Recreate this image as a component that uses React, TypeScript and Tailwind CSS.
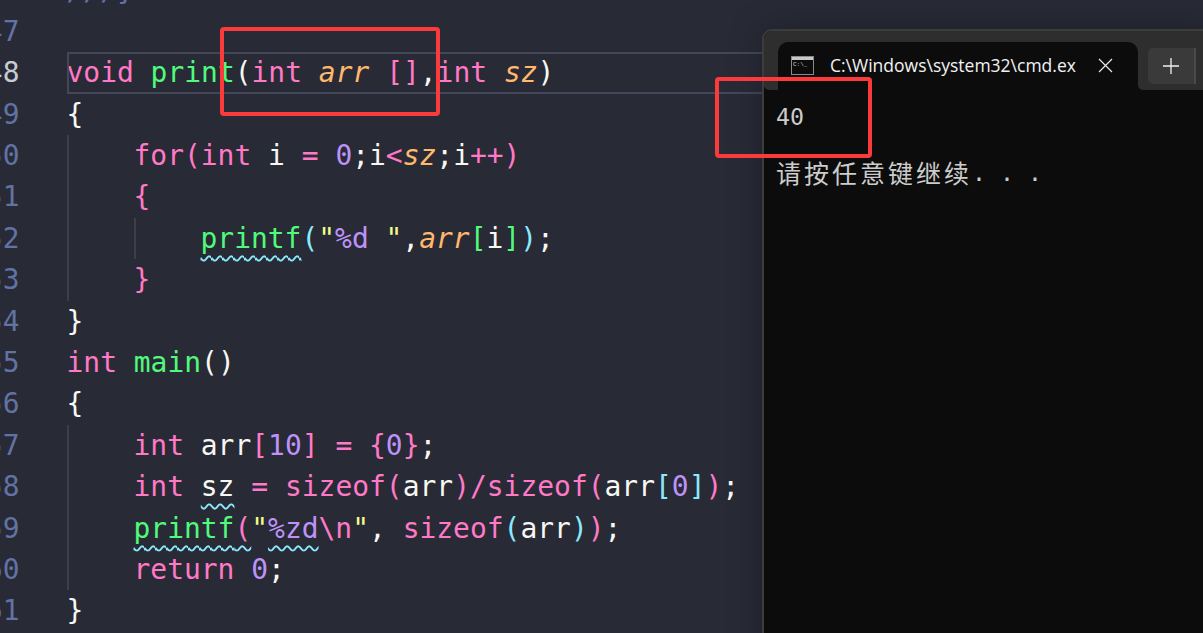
import React from "react";

type Tok = [string, string?];
const P = "text-[#ff79c6]";
const G = "text-[#50fa7b]";
const O = "text-[#ffb86c] italic";
const V = "text-[#bd93f9]";
const Y = "text-[#f1fa8c]";
const C = "text-[#8be9fd]";
const W = "text-[#f8f8f2]";
const K = "text-[#6272a4]";
const WP = "text-[#50fa7b] underline decoration-wavy decoration-[#8be9fd] decoration-[1.5px] underline-offset-[7px]";
const WS = "text-[#f8f8f2] underline decoration-wavy decoration-[#8be9fd] decoration-[1.5px] underline-offset-[7px]";
const WV = "text-[#bd93f9] underline decoration-wavy decoration-[#8be9fd] decoration-[1.5px] underline-offset-[7px]";
const WR = "text-[#ff79c6] underline decoration-wavy decoration-[#8be9fd] decoration-[1.5px] underline-offset-[7px]";

type Line = { n: number; indent: number; toks: Tok[]; active?: boolean };

const lines: Line[] = [
  { n: 46, indent: 0, toks: [["///}", K]] },
  { n: 47, indent: 0, toks: [] },
  {
    n: 48, indent: 0, active: true,
    toks: [["void", P], [" "], ["print", G], ["(", W], ["int", P], [" "], ["arr", O], [" "], ["[]", P], [",", W], ["int", P], [" "], ["sz", O], [")", W]],
  },
  { n: 49, indent: 0, toks: [["{", W]] },
  {
    n: 50, indent: 1,
    toks: [["for", P], ["(", P], ["int", P], [" i ", W], ["=", P], [" "], ["0", V], [";i", W], ["<", P], ["sz", O], [";i", W], ["++", P], [")", P]],
  },
  { n: 51, indent: 1, toks: [["{", P]] },
  {
    n: 52, indent: 2,
    toks: [["printf", WP], ["(", C], ['"', Y], ["%d", V], [' "', Y], [",", W], ["arr", O], ["[", G], ["i", W], ["]", G], [")", C], [";", W]],
  },
  { n: 53, indent: 1, toks: [["}", P]] },
  { n: 54, indent: 0, toks: [["}", W]] },
  { n: 55, indent: 0, toks: [["int", P], [" "], ["main", G], ["()", W]] },
  { n: 56, indent: 0, toks: [["{", W]] },
  {
    n: 57, indent: 1,
    toks: [["int", P], [" arr", W], ["[", P], ["10", V], ["]", P], [" "], ["=", P], [" "], ["{", P], ["0", V], ["}", P], [";", W]],
  },
  {
    n: 58, indent: 1,
    toks: [["int", P], [" "], ["sz", WS], [" "], ["=", P], [" "], ["sizeof", P], ["(", P], ["arr", W], [")", P], ["/", P], ["sizeof", P], ["(", P], ["arr", W], ["[", C], ["0", V], ["]", C], [")", P], [";", W]],
  },
  {
    n: 59, indent: 1,
    toks: [["printf", WP], ["(", WR], ['"', Y], ["%zd", WV], ["\\n", P], ['"', Y], [", ", W], ["sizeof", P], ["(", C], ["arr", W], [")", C], [")", P], [";", W]],
  },
  { n: 60, indent: 1, toks: [["return", P], [" "], ["0", V], [";", W]] },
  { n: 61, indent: 0, toks: [["}", W]] },
];

function CmdIcon() {
  return (
    <svg width="23" height="19" viewBox="0 0 23 19" className="shrink-0">
      <rect x="0.5" y="0.5" width="22" height="18" fill="#0c0c0c" stroke="#8a8a8a" />
      <rect x="1" y="1" width="21" height="3" fill="#c8c8c8" />
      <text x="2" y="10" fontSize="6" fill="#d0d0d0" fontFamily="'Liberation Mono', monospace">C:\_</text>
    </svg>
  );
}

export default function App() {
  return (
    <div className="relative h-[633px] w-[1203px] overflow-hidden bg-[#282a36] font-['DejaVu_Sans_Mono',monospace] text-[27.95px]">
      <div className="-mt-[30.5px] flex flex-col">
        {lines.map((l) => (
          <div key={l.n} className="flex h-[41.4px] items-center leading-[41.4px]">
            <div className="mr-[47.5px] flex w-[19.5px] shrink-0 justify-end overflow-hidden">
              <span className={l.active ? "text-[#c9cbd3]" : "text-[#6272a4]"}>{l.n}</span>
            </div>
            <div className="relative flex h-full flex-1 items-center whitespace-pre">
              {l.active && <div className="absolute inset-0 border-2 border-[#44475a]" />}
              {Array.from({ length: l.indent }).map((_, i) => (
                <span key={i} className="h-full w-[67px] shrink-0 border-l-2 border-[#3c3e4b]" />
              ))}
              <span className="-ml-[0.5px] text-[#f8f8f2]">
                {l.toks.map((t, i) => (
                  <span key={i} className={t[1]}>{t[0]}</span>
                ))}
              </span>
            </div>
          </div>
        ))}
      </div>

      {/* terminal window */}
      <div className="absolute left-[762px] top-[29px] flex h-[640px] w-[460px] flex-col rounded-tl-[10px] border-l-2 border-t-2 border-[#3c3c3c] bg-[#0c0c0c] shadow-[0_0_34px_rgba(0,0,0,0.28)]">
        <div className="flex h-[59px] shrink-0">
          <div className="w-[14px] rounded-bl-[5px] rounded-tl-[8px] bg-[#2e2e2e]" />
          <div className="relative w-[360px] bg-[#2e2e2e]">
            <div className="mt-[11px] flex h-full items-center rounded-t-[10px] bg-[#0c0c0c] pb-[12px] pl-[13px]">
              <CmdIcon />
              <span className="ml-[16px] w-[246px] overflow-hidden whitespace-nowrap font-['Open_Sans',sans-serif] text-[17.5px] text-[#f2f2f2]">
                C:\Windows\system32\cmd.exe
              </span>
              <svg width="15" height="15" viewBox="0 0 15 15" className="ml-[22px] shrink-0" fill="none" stroke="#e8e8e8" strokeWidth="1.2">
                <path d="M1 1 14 14M14 1 1 14" />
              </svg>
            </div>
          </div>
          <div className="flex flex-1 rounded-bl-[5px] bg-[#2e2e2e] pl-[10px] pt-[17px]">
            <div className="flex h-[36px] w-[48px] items-center justify-center rounded-l-[5px] border-r-2 border-[#4a4a4a] bg-[#3a3a3a]">
              <svg width="16" height="16" viewBox="0 0 16 16" fill="none" stroke="#f0f0f0" strokeWidth="1.3">
                <path d="M8 0v16M0 8h16" />
              </svg>
            </div>
          </div>
        </div>
        <div className="pl-[12px] pt-[13px] font-['DejaVu_Sans_Mono','Noto_Sans_CJK_SC',monospace] text-[23.25px] leading-[28px] text-[#cccccc]">
          <div>40</div>
          <div className="h-[27px]" />
          <div className="flex whitespace-pre">
            <span className="font-['Noto_Sans_CJK_SC',sans-serif] text-[25px] tracking-[3px]">请按任意键继续</span>
            <span className="relative top-[1px]">. . .</span>
          </div>
        </div>
      </div>

      {/* annotations */}
      <div className="absolute left-[220px] top-[27px] h-[89px] w-[220px] rounded-[4px] border-4 border-[#fb3b3b]" />
      <div className="absolute left-[715px] top-[77px] h-[81px] w-[157px] rounded-[4px] border-4 border-[#fb3b3b]" />
    </div>
  );
}
